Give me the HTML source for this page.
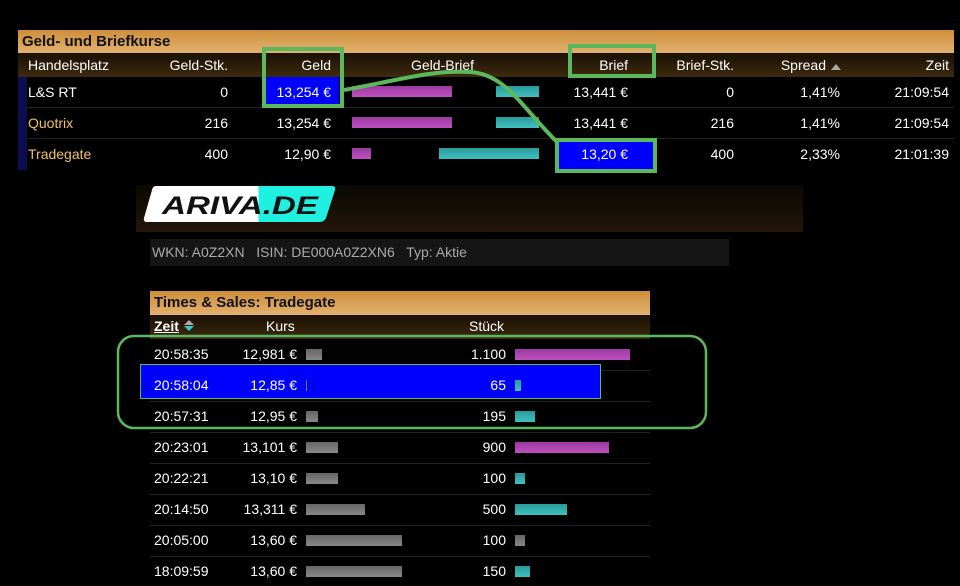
<!DOCTYPE html>
<html><head><meta charset="utf-8"><style>
*{margin:0;padding:0;box-sizing:border-box}
body{width:960px;height:586px;background:#000;position:relative;overflow:hidden;font-family:"Liberation Sans",Arial,sans-serif;font-size:14px;color:#fff}
.a{position:absolute;white-space:nowrap}
.r{text-align:right}
.hd{background:linear-gradient(#cd8e3a,#e2b170);color:#111;font-weight:bold;font-size:15px}
.ch{background:linear-gradient(#1a1005,#3d2a0e)}
.ln{position:absolute;height:1px;background:#222}
.mg{position:absolute;height:11px;background:linear-gradient(#9a3aa0,#c050c0)}
.tl{position:absolute;height:11px;background:linear-gradient(#2a9a9a,#40c0c0)}
.gr{position:absolute;height:11px;background:linear-gradient(#666,#888)}
</style></head><body>
<div class="a hd" style="left:18px;top:30px;width:936px;height:23px;padding:3px 0 0 4px">Geld- und Briefkurse</div>
<div class="a ch" style="left:18px;top:53px;width:936px;height:24px"></div>
<div class="a" style="left:18px;top:77px;width:9px;height:93px;background:#0c0c50"></div>
<div class="ln" style="left:27px;top:107px;width:927px"></div>
<div class="ln" style="left:27px;top:138px;width:927px"></div>
<div class="a" style="left:28px;top:57px">Handelsplatz</div>
<div class="a r" style="left:128px;width:100px;top:57px">Geld-Stk.</div>
<div class="a r" style="left:231px;width:100px;top:57px">Geld</div>
<div class="a" style="left:411px;top:57px">Geld-Brief</div>
<div class="a r" style="left:528px;width:100px;top:57px">Brief</div>
<div class="a r" style="left:634px;width:100px;top:57px">Brief-Stk.</div>
<div class="a r" style="left:726px;width:100px;top:57px">Spread</div>
<div class="a" style="left:831px;top:64px;width:0;height:0;border-left:5px solid transparent;border-right:5px solid transparent;border-bottom:6px solid #aaa"></div>
<div class="a r" style="left:849px;width:100px;top:57px">Zeit</div>
<div class="a" style="left:265px;top:77px;width:74px;height:28px;background:#0000ff"></div>
<div class="a" style="left:558px;top:142px;width:95px;height:28px;background:#0000ff"></div>
<div class="a" style="left:28px;top:84px">L&amp;S RT</div>
<div class="a" style="left:28px;top:115px;color:#f0c060">Quotrix</div>
<div class="a" style="left:28px;top:146px;color:#f0c060">Tradegate</div>
<div class="a r" style="left:128px;width:100px;top:84px">0</div>
<div class="a r" style="left:128px;width:100px;top:115px">216</div>
<div class="a r" style="left:128px;width:100px;top:146px">400</div>
<div class="a r" style="left:231px;width:100px;top:84px">13,254 €</div>
<div class="a r" style="left:231px;width:100px;top:115px">13,254 €</div>
<div class="a r" style="left:231px;width:100px;top:146px">12,90 €</div>
<div class="mg" style="left:352px;top:86px;width:100px"></div>
<div class="mg" style="left:352px;top:117px;width:100px"></div>
<div class="mg" style="left:352px;top:148px;width:19px"></div>
<div class="tl" style="left:496px;top:86px;width:43px"></div>
<div class="tl" style="left:496px;top:117px;width:43px"></div>
<div class="tl" style="left:439px;top:148px;width:100px"></div>
<div class="a r" style="left:528px;width:100px;top:84px">13,441 €</div>
<div class="a r" style="left:528px;width:100px;top:115px">13,441 €</div>
<div class="a r" style="left:528px;width:100px;top:146px">13,20 €</div>
<div class="a r" style="left:634px;width:100px;top:84px">0</div>
<div class="a r" style="left:634px;width:100px;top:115px">216</div>
<div class="a r" style="left:634px;width:100px;top:146px">400</div>
<div class="a r" style="left:740px;width:100px;top:84px">1,41%</div>
<div class="a r" style="left:740px;width:100px;top:115px">1,41%</div>
<div class="a r" style="left:740px;width:100px;top:146px">2,33%</div>
<div class="a r" style="left:849px;width:100px;top:84px">21:09:54</div>
<div class="a r" style="left:849px;width:100px;top:115px">21:09:54</div>
<div class="a r" style="left:849px;width:100px;top:146px">21:01:39</div>
<div class="a" style="left:136px;top:185px;width:667px;height:47px;background:linear-gradient(#0a0703,#231608)"></div>
<svg class="a" style="left:136px;top:182px" width="210" height="44"><defs><linearGradient id="lg" x1="0" x2="1"><stop offset="0.6" stop-color="#fff"/><stop offset="0.6" stop-color="#20f0e0"/></linearGradient></defs>
<path d="M20,4 L196,4 Q200,4 199,8 L190,36 Q188,40 184,40 L11,40 Q7,40 8,36 L16,8 Q17,4 20,4Z" fill="url(#lg)"/>
<text x="26" y="32" font-family="Liberation Sans" font-weight="bold" font-style="italic" font-size="25" fill="#111" textLength="156" lengthAdjust="spacingAndGlyphs">ARIVA.DE</text></svg>
<div class="a" style="left:150px;top:239px;width:579px;height:27px;background:#151515;color:#aaa;padding:5px 0 0 2px">WKN: A0Z2XN &nbsp; ISIN: DE000A0Z2XN6 &nbsp; Typ: Aktie</div>
<div class="a hd" style="left:150px;top:291px;width:500px;height:24px;padding:3px 0 0 4px">Times &amp; Sales: Tradegate</div>
<div class="a ch" style="left:150px;top:315px;width:500px;height:24px"></div>
<div class="a" style="left:154px;top:318px;font-weight:bold;text-decoration:underline">Zeit</div>
<div class="a" style="left:184px;top:320px;border-left:5px solid transparent;border-right:5px solid transparent;border-bottom:5px solid #aaa"></div>
<div class="a" style="left:184px;top:326px;border-left:5px solid transparent;border-right:5px solid transparent;border-top:5px solid #3cc"></div>
<div class="a" style="left:266px;top:318px">Kurs</div>
<div class="a" style="left:469px;top:318px">Stück</div>
<div class="ln" style="left:150px;top:370px;width:500px"></div>
<div class="ln" style="left:150px;top:401px;width:500px"></div>
<div class="ln" style="left:150px;top:432px;width:500px"></div>
<div class="ln" style="left:150px;top:463px;width:500px"></div>
<div class="ln" style="left:150px;top:494px;width:500px"></div>
<div class="ln" style="left:150px;top:525px;width:500px"></div>
<div class="ln" style="left:150px;top:556px;width:500px"></div>
<div class="a" style="left:140px;top:364px;width:461px;height:35px;background:#0000ff;border:1px solid #5cb85c"></div>
<div class="a" style="left:154px;top:346px">20:58:35</div><div class="a r" style="left:197px;width:100px;top:346px">12,981 €</div><div class="gr" style="left:306px;top:349px;width:16px"></div><div class="a r" style="left:406px;width:100px;top:346px">1.100</div><div class="mg" style="left:515px;top:349px;width:115px"></div>
<div class="a" style="left:154px;top:377px">20:58:04</div><div class="a r" style="left:197px;width:100px;top:377px">12,85 €</div><div class="gr" style="left:306px;top:380px;width:1px"></div><div class="a r" style="left:406px;width:100px;top:377px">65</div><div class="tl" style="left:515px;top:380px;width:6px"></div>
<div class="a" style="left:154px;top:408px">20:57:31</div><div class="a r" style="left:197px;width:100px;top:408px">12,95 €</div><div class="gr" style="left:306px;top:411px;width:12px"></div><div class="a r" style="left:406px;width:100px;top:408px">195</div><div class="tl" style="left:515px;top:411px;width:20px"></div>
<div class="a" style="left:154px;top:439px">20:23:01</div><div class="a r" style="left:197px;width:100px;top:439px">13,101 €</div><div class="gr" style="left:306px;top:442px;width:32px"></div><div class="a r" style="left:406px;width:100px;top:439px">900</div><div class="mg" style="left:515px;top:442px;width:94px"></div>
<div class="a" style="left:154px;top:470px">20:22:21</div><div class="a r" style="left:197px;width:100px;top:470px">13,10 €</div><div class="gr" style="left:306px;top:473px;width:32px"></div><div class="a r" style="left:406px;width:100px;top:470px">100</div><div class="tl" style="left:515px;top:473px;width:10px"></div>
<div class="a" style="left:154px;top:501px">20:14:50</div><div class="a r" style="left:197px;width:100px;top:501px">13,311 €</div><div class="gr" style="left:306px;top:504px;width:59px"></div><div class="a r" style="left:406px;width:100px;top:501px">500</div><div class="tl" style="left:515px;top:504px;width:52px"></div>
<div class="a" style="left:154px;top:532px">20:05:00</div><div class="a r" style="left:197px;width:100px;top:532px">13,60 €</div><div class="gr" style="left:306px;top:535px;width:96px"></div><div class="a r" style="left:406px;width:100px;top:532px">100</div><div class="gr" style="left:515px;top:535px;width:10px"></div>
<div class="a" style="left:154px;top:563px">18:09:59</div><div class="a r" style="left:197px;width:100px;top:563px">13,60 €</div><div class="gr" style="left:306px;top:566px;width:96px"></div><div class="a r" style="left:406px;width:100px;top:563px">150</div><div class="tl" style="left:515px;top:566px;width:15px"></div>
<svg class="a" style="left:0;top:0" width="960" height="586" fill="none" stroke="#5cb85c">
<rect x="264" y="49" width="78" height="57" stroke-width="4"/>
<rect x="570" y="46" width="84" height="30" stroke-width="4"/>
<rect x="557" y="140" width="98" height="31" stroke-width="4"/>
<path d="M344,90 C400,80 430,70 470,72 C505,74 520,105 557,142" stroke-width="4"/>
<rect x="118" y="336" width="588" height="92" rx="16" stroke-width="2.5"/>
</svg>
</body></html>
